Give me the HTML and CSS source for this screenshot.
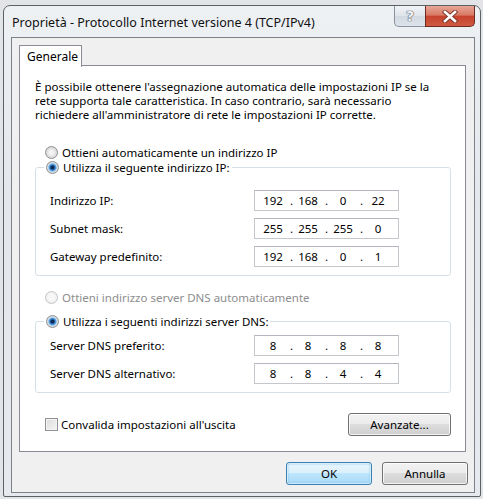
FILE: index.html
```html
<!DOCTYPE html>
<html lang="it">
<head>
<meta charset="utf-8">
<title>Proprietà - Protocollo Internet versione 4 (TCP/IPv4)</title>
<link rel="stylesheet" href="styles.css">
</head>
<body>
<div class="window">
  <div class="titlebar">
    <span class="title">Proprietà - Protocollo Internet versione 4 (TCP/IPv4)</span>
    <div class="caption-btns">
      <span class="cb help">?</span>
      <span class="cb close">
        <svg width="18" height="13" viewBox="0 0 18 13"><path d="M4 2 L14 11 M14 2 L4 11" stroke="#7a3a30" stroke-width="4.4" stroke-linecap="square" fill="none"/><path d="M4 2 L14 11 M14 2 L4 11" stroke="#ffffff" stroke-width="2.6" stroke-linecap="square" fill="none"/></svg>
      </span>
    </div>
  </div>
  <div class="client">
    <div class="tabs"><span class="tab">Generale</span></div>
    <div class="panel">
      <p class="intro">È possibile ottenere l'assegnazione automatica delle impostazioni IP se la rete supporta tale caratteristica. In caso contrario, sarà necessario richiedere all'amministratore di rete le impostazioni IP corrette.</p>
      <label class="opt first"><span class="radio"></span>Ottieni automaticamente un indirizzo IP</label>
      <fieldset class="group ipgroup">
        <legend><span class="opt"><span class="radio on"></span>Utilizza il seguente indirizzo IP:</span></legend>
        <div class="row"><span class="lbl">Indirizzo IP:</span><div class="ip"><span class="seg">192</span><span class="dot">.</span><span class="seg">168</span><span class="dot">.</span><span class="seg">0</span><span class="dot">.</span><span class="seg">22</span></div></div>
        <div class="row"><span class="lbl">Subnet mask:</span><div class="ip"><span class="seg">255</span><span class="dot">.</span><span class="seg">255</span><span class="dot">.</span><span class="seg">255</span><span class="dot">.</span><span class="seg">0</span></div></div>
        <div class="row"><span class="lbl">Gateway predefinito:</span><div class="ip"><span class="seg">192</span><span class="dot">.</span><span class="seg">168</span><span class="dot">.</span><span class="seg">0</span><span class="dot">.</span><span class="seg">1</span></div></div>
      </fieldset>
      <label class="opt disabled dnsauto"><span class="radio off"></span>Ottieni indirizzo server DNS automaticamente</label>
      <fieldset class="group dnsgroup">
        <legend><span class="opt"><span class="radio on"></span>Utilizza i seguenti indirizzi server DNS:</span></legend>
        <div class="row"><span class="lbl">Server DNS preferito:</span><div class="ip"><span class="seg">8</span><span class="dot">.</span><span class="seg">8</span><span class="dot">.</span><span class="seg">8</span><span class="dot">.</span><span class="seg">8</span></div></div>
        <div class="row"><span class="lbl">Server DNS alternativo:</span><div class="ip"><span class="seg">8</span><span class="dot">.</span><span class="seg">8</span><span class="dot">.</span><span class="seg">4</span><span class="dot">.</span><span class="seg">4</span></div></div>
      </fieldset>
      <div class="bottomrow">
        <label class="opt"><span class="check"></span>Convalida impostazioni all'uscita</label>
        <button class="btn adv">Avanzate...</button>
      </div>
    </div>
    <div class="actions">
      <button class="btn default">OK</button>
      <button class="btn">Annulla</button>
    </div>
  </div>
</div>
</body>
</html>
```

FILE: styles.css
```css
* { box-sizing: border-box; }
html, body { margin: 0; }
body {
  background: #e2e4e7;
  padding: 5px 2px 0 3px;
  font-family: "Noto Sans", "Open Sans", sans-serif;
  font-size: 11.5px;
  color: #000;
  width: 483px;
  height: 499px;
  overflow: hidden;
}
.window {
  width: 478px;
  height: 492px;
  border: 1px solid #5d6166;
  border-radius: 7px 7px 2px 2px;
  background: linear-gradient(180deg, #eef1f4 0%, #e3e7eb 40%, #e6e9ed 100%);
  display: flex;
  flex-direction: column;
}
.titlebar {
  height: 31px;
  display: flex;
  justify-content: space-between;
  align-items: flex-start;
}
.title {
  padding: 8px 0 0 8px;
  font-size: 12.5px;
  line-height: 17px;
  color: #111;
}
.caption-btns {
  display: flex;
  margin-right: 5px;
}
.cb {
  height: 21px;
  display: flex;
  align-items: center;
  justify-content: center;
}
.help {
  width: 31px;
  border: 1px solid #8a929c;
  border-top: none;
  border-right: none;
  border-radius: 0 0 0 5px;
  background: linear-gradient(180deg, #f1f4f7 0%, #dfe4ea 50%, #d2d9e1 51%, #dde3ea 100%);
  font-family: "DejaVu Sans", sans-serif;
  font-size: 14px;
  font-weight: bold;
  color: #eef1f4;
  text-shadow: 0 0 1px #5a5f66, 0 0 1px #5a5f66, 0 0 1px #5a5f66;
}
.close {
  width: 50px;
  border: 1px solid #6b2a22;
  border-top: none;
  border-radius: 0 0 5px 0;
  background: linear-gradient(180deg, #e8a696 0%, #d87a66 45%, #c8432d 52%, #cf5a42 100%);
}
.client {
  margin: 0 5px 3px 7px;
  flex: 1;
  border: 1px solid #7c8087;
  background: #f0f0f0;
  padding: 7px 8px 0 7px;
  display: flex;
  flex-direction: column;
}
.tabs {
  display: flex;
  height: 21px;
  margin-bottom: -1px;
  position: relative;
  z-index: 1;
}
.tab {
  width: 63px;
  height: 22px;
  border: 1px solid #898c95;
  border-bottom: none;
  background: #fff;
  padding: 3px 0 0 7px;
  line-height: 15px;
  font-size: 12px;
}
.panel {
  height: 387px;
  border: 1px solid #898c95;
  background: #fff;
  display: flex;
  flex-direction: column;
}
.intro {
  margin: 0;
  padding: 14px 28px 0 15px;
  line-height: 14px;
}
.opt {
  display: flex;
  align-items: center;
  height: 15px;
  line-height: 15px;
  white-space: nowrap;
}
.first { margin: 23px 0 0 25px; }
.radio {
  width: 13px;
  height: 13px;
  border-radius: 50%;
  border: 1px solid #8f9296;
  background: radial-gradient(circle at 50% 50%, #f4f4f4 0 2px, #e3e3e3 4px, #cfd1d3 6px);
  margin-right: 4px;
  flex: none;
}
.radio.on {
  background:
    radial-gradient(circle at 50% 50%, #0d2a53 0 1.4px, #2d6fb8 2.4px, #5fa6e2 3.4px, #a6d2f2 4.2px, rgba(255,255,255,0) 4.6px),
    radial-gradient(circle at 50% 50%, #f4f4f4 0 2px, #e3e3e3 4px, #cfd1d3 6px);
}
.radio.off {
  border-color: #c4c6c9;
  background: radial-gradient(circle at 50% 50%, #f7f7f7 0 3px, #ececec 6px);
}
.disabled { color: #8d8d8d; }
.check {
  width: 13px;
  height: 13px;
  border: 1px solid #8f9296;
  background: linear-gradient(135deg, #dcdcdc, #f6f6f6);
  box-shadow: inset 0 0 0 1px #f4f4f4;
  margin-right: 3px;
  flex: none;
}
.group {
  margin: 0 14px 0 15px;
  border: 1px solid #d5dfe5;
  border-radius: 3px;
  padding: 0 0 8px 14px;
  min-width: 0;
}
.group legend {
  padding: 0 2px;
  margin-left: -6px;
  height: 15px;
}
.ipgroup { margin-top: 0; padding-top: 15px; }
.dnsgroup { margin-top: 9px; padding-top: 6px; }
.dnsauto { margin: 14px 0 0 25px; }
.row {
  display: flex;
  align-items: center;
  height: 21px;
}
.row + .row { margin-top: 7px; }
.lbl { width: 204px; }
.ip {
  width: 145px;
  height: 21px;
  border: 1px solid #c4c7cc;
  border-top-color: #b4b7bd;
  background: #fff;
  display: flex;
  padding-left: 3px;
  line-height: 19px;
}
.seg { width: 30px; text-align: center; }
.dot { width: 5px; text-align: right; }
.bottomrow {
  margin: 20px 14px 0 25px;
  display: flex;
  justify-content: space-between;
  align-items: center;
}
.btn {
  font-family: inherit;
  font-size: 11.5px;
  color: #000;
  height: 23px;
  border: 1px solid #707070;
  border-radius: 3px;
  background: linear-gradient(180deg, #f2f2f2 0%, #ebebeb 49%, #dddddd 50%, #cfcfcf 100%);
  box-shadow: inset 0 0 0 1px rgba(255,255,255,0.75);
  padding: 0;
  line-height: 19px;
}
.adv { width: 103px; }
.actions {
  margin-top: 10px;
  display: flex;
  justify-content: flex-end;
  gap: 10px;
  margin-right: -2px;
}
.actions .btn { width: 86px; }
.btn.default {
  border-color: #3c7fb1;
  background: linear-gradient(180deg, #eaf6fd 0%, #d9f0fc 49%, #bee6fd 50%, #a7d9f5 100%);
  box-shadow: inset 0 0 0 1px rgba(255,255,255,0.6), inset 0 0 2px 1px #7fc4ef;
}
```
